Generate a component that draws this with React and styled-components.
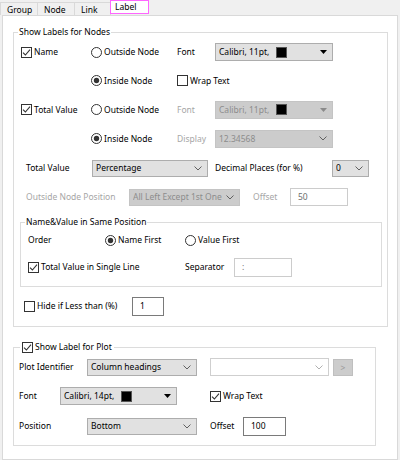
import React from "react";
import styled, { createGlobalStyle } from "styled-components";

const GlobalStyle = createGlobalStyle`
  html, body { margin: 0; padding: 0; background: #f0f0f0; }
  body { font-family: "Noto Sans", "Open Sans", sans-serif; font-size: 8.5px; color: #000; }
  * { box-sizing: border-box; }
`;

const Page = styled.div`
  width: 400px;
  height: 460px;
  background: #f0f0f0;
  display: flex;
  flex-direction: column;
  overflow: hidden;
`;

const TabStrip = styled.div`
  height: 15px;
  display: flex;
  align-items: flex-end;
  padding-left: 0;
`;

const Tab = styled.div`
  width: ${(p) => p.$w}px;
  height: ${(p) => (p.$active ? 14 : 13)}px;
  margin-bottom: ${(p) => (p.$active ? 1 : 0)}px;
  padding: ${(p) => (p.$active ? "0 0 0 4px" : "1px 0 0 6px")};
  line-height: 12px;
  background: ${(p) => (p.$active ? "#ffffff" : "#f0f0f0")};
  border: 1px solid ${(p) => (p.$active ? "#ff66ff" : "#d9d9d9")};
  border-bottom: ${(p) => (p.$active ? "1px solid #ff66ff" : "none")};
  margin-right: ${(p) => (p.$active ? 0 : -1)}px;
  color: #000;
`;

const Panel = styled.div`
  margin: 0 2px;
  height: 445px;
  background: #fff;
  border: 1px solid #d9d9d9;
  padding: 10px 0 0 10px;
  display: flex;
  flex-direction: column;
`;

const Group = styled.fieldset`
  margin: ${(p) => p.$mt || 0}px 0 0 ${(p) => p.$ml || 0}px;
  padding: 0 ${(p) => p.$pr || 0}px ${(p) => p.$pb || 0}px ${(p) => p.$pl || 0}px;
  width: ${(p) => p.$w}px;
  min-width: 0;
  border: 1px solid #dcdcdc;
  display: flex;
  flex-direction: column;
`;

const Legend = styled.legend`
  padding: 0 ${(p) => p.$px ?? 1}px;
  margin-left: ${(p) => p.$ml || 0}px;
  line-height: 12px;
  height: 12px;
  display: flex;
  align-items: center;
  gap: 2px;
`;

const Row = styled.div`
  height: ${(p) => p.$h}px;
  padding-left: ${(p) => p.$pl || 0}px;
  margin-top: ${(p) => p.$mt || 0}px;
  display: flex;
  align-items: center;
`;

const Cell = styled.div`
  width: ${(p) => p.$w}px;
  padding-left: ${(p) => p.$pl || 0}px;
  flex: none;
  display: flex;
  align-items: center;
  gap: 2px;
  white-space: nowrap;
`;

const Text = styled.span`
  color: ${(p) => (p.$disabled ? "#a6a6a6" : "#000")};
  line-height: 12px;
  white-space: nowrap;
`;

const Box = styled.span`
  width: 11px;
  height: 11px;
  flex: none;
  display: inline-flex;
  align-items: center;
  justify-content: center;
  border: 1px solid #333;
  background: #fff;
`;

const Check = ({ checked, children }) => (
  <>
    <Box>
      {checked && (
        <svg width="9" height="9" viewBox="0 0 9 9">
          <polyline points="1,4.6 3.4,7 8,1.6" fill="none" stroke="#333" strokeWidth="1.1" />
        </svg>
      )}
    </Box>
    {children && <Text>{children}</Text>}
  </>
);

const Radio = ({ checked, children }) => (
  <>
    <svg width="11" height="11" viewBox="0 0 11 11" style={{ flex: "none" }}>
      <circle cx="5.5" cy="5.5" r="5" fill="#fff" stroke="#333" strokeWidth="1" />
      {checked && <circle cx="5.5" cy="5.5" r="2.7" fill="#333" />}
    </svg>
    <Text>{children}</Text>
  </>
);

const SelectBox = styled.div`
  width: ${(p) => p.$w}px;
  height: ${(p) => p.$h || 18}px;
  flex: none;
  display: flex;
  align-items: center;
  padding: 0 5px 0 3px;
  background: ${(p) => (p.$white ? "#fff" : p.$disabled ? "#cccccc" : "#e1e1e1")};
  border: 1px solid ${(p) => (p.$white ? "#cfcfcf" : p.$disabled ? "#c4c4c4" : "#adadad")};
  color: ${(p) => (p.$disabled ? "#8c8c8c" : "#000")};
  line-height: 12px;
  white-space: nowrap;
  overflow: hidden;
`;

const SelectText = styled.span`
  flex: 1;
  overflow: hidden;
  display: flex;
  align-items: center;
  gap: 7px;
`;

const Swatch = styled.span`
  width: 11px;
  height: 11px;
  background: #000;
  border: 1px solid #555;
  flex: none;
`;

const Triangle = ({ disabled }) => (
  <svg width="7" height="4" viewBox="0 0 7 4" style={{ flex: "none" }}>
    <polygon points="0,0 7,0 3.5,4" fill={disabled ? "#8a8a8a" : "#000"} />
  </svg>
);

const Chevron = ({ light }) => (
  <svg width="8" height="5" viewBox="0 0 8 5" style={{ flex: "none" }}>
    <polyline points="0.5,0.5 4,4 7.5,0.5" fill="none" stroke={light ? "#b0b0b0" : "#606060"} strokeWidth="1" />
  </svg>
);

const Select = ({ w, h, disabled, white, font, children }) => (
  <SelectBox $w={w} $h={h} $disabled={disabled} $white={white}>
    <SelectText>
      {children}
      {font && <Swatch />}
    </SelectText>
    {font ? <Triangle disabled={disabled} /> : <Chevron light={white} />}
  </SelectBox>
);

const Input = styled.div`
  width: ${(p) => p.$w}px;
  height: ${(p) => p.$h || 19}px;
  flex: none;
  display: flex;
  align-items: center;
  padding-left: 7px;
  background: #fff;
  border: 1px solid ${(p) => (p.$disabled ? "#cccccc" : "#7a7a7a")};
  color: ${(p) => (p.$disabled ? "#6d6d6d" : "#000")};
  line-height: 12px;
`;

const SmallButton = styled.div`
  width: 20px;
  height: 17px;
  flex: none;
  display: flex;
  align-items: center;
  justify-content: center;
  background: #cccccc;
  border: 1px solid #bfbfbf;
  color: #9a9a9a;
`;

export default function App() {
  return (
    <Page>
      <GlobalStyle />
      <TabStrip>
        <Tab $w={38}>Group</Tab>
        <Tab $w={38}>Node</Tab>
        <Tab $w={37}>Link</Tab>
        <Tab $w={39} $active>Label</Tab>
      </TabStrip>
      <Panel>
        <Group $w={375} $pl={7} $pr={4} $pb={7}>
          <Legend $ml={-3}>Show Labels for Nodes</Legend>
          <Row $h={28}>
            <Cell $w={70}><Check checked>Name</Check></Cell>
            <Cell $w={86}><Radio>Outside Node</Radio></Cell>
            <Cell $w={38}><Text>Font</Text></Cell>
            <Select w={118} font>Calibri, 11pt,</Select>
          </Row>
          <Row $h={29}>
            <Cell $w={70} />
            <Cell $w={86}><Radio checked>Inside Node</Radio></Cell>
            <Cell $w={80}><Check>Wrap Text</Check></Cell>
          </Row>
          <Row $h={29}>
            <Cell $w={70}><Check checked>Total Value</Check></Cell>
            <Cell $w={86}><Radio>Outside Node</Radio></Cell>
            <Cell $w={38}><Text $disabled>Font</Text></Cell>
            <Select w={118} font disabled>Calibri, 11pt,</Select>
          </Row>
          <Row $h={29}>
            <Cell $w={70} />
            <Cell $w={86}><Radio checked>Inside Node</Radio></Cell>
            <Cell $w={38}><Text $disabled>Display</Text></Cell>
            <Select w={118} disabled>12.34568</Select>
          </Row>
          <Row $h={30} $pl={5}>
            <Cell $w={66}><Text>Total Value</Text></Cell>
            <Select w={116} h={17}>Percentage</Select>
            <Cell $w={124} $pl={7}><Text>Decimal Places (for %)</Text></Cell>
            <Select w={37} h={17}>0</Select>
          </Row>
          <Row $h={28} $pl={5}>
            <Cell $w={103}><Text $disabled>Outside Node Position</Text></Cell>
            <Select w={111} h={17} disabled>All Left Except 1st One</Select>
            <Cell $w={50} $pl={13}><Text $disabled>Offset</Text></Cell>
            <Input $w={58} $h={18} $disabled>50</Input>
          </Row>
          <Group $w={362} $ml={-1} $mt={5} $pl={7} $pb={4}>
            <Legend $ml={-3}>Name&amp;Value in Same Position</Legend>
            <Row $h={24}>
              <Cell $w={77}><Text>Order</Text></Cell>
              <Cell $w={80}><Radio checked>Name First</Radio></Cell>
              <Cell $w={80}><Radio>Value First</Radio></Cell>
            </Row>
            <Row $h={30}>
              <Cell $w={157}><Check checked>Total Value in Single Line</Check></Cell>
              <Cell $w={49}><Text>Separator</Text></Cell>
              <Input $w={58} $disabled>:</Input>
            </Row>
          </Group>
          <Row $h={26} $mt={6} $pl={3}>
            <Cell $w={108}><Check>Hide if Less than (%)</Check></Cell>
            <Input $w={32}>1</Input>
          </Row>
        </Group>
        <Group $w={363} $mt={14} $pl={5} $pb={4}>
          <Legend $ml={1} $px={2}><Check checked>Show Label for Plot</Check></Legend>
          <Row $h={28}>
            <Cell $w={68}><Text>Plot Identifier</Text></Cell>
            <Select w={110} h={17}>Column headings</Select>
            <Cell $w={13} />
            <Select w={119} white>{""}</Select>
            <Cell $w={4} />
            <SmallButton>&gt;</SmallButton>
          </Row>
          <Row $h={30}>
            <Cell $w={41}><Text>Font</Text></Cell>
            <Select w={117} font>Calibri, 14pt,</Select>
            <Cell $w={33} />
            <Cell $w={80}><Check checked>Wrap Text</Check></Cell>
          </Row>
          <Row $h={30}>
            <Cell $w={68}><Text>Position</Text></Cell>
            <Select w={110} h={17}>Bottom</Select>
            <Cell $w={46} $pl={13}><Text>Offset</Text></Cell>
            <Input $w={43}>100</Input>
          </Row>
        </Group>
      </Panel>
    </Page>
  );
}
